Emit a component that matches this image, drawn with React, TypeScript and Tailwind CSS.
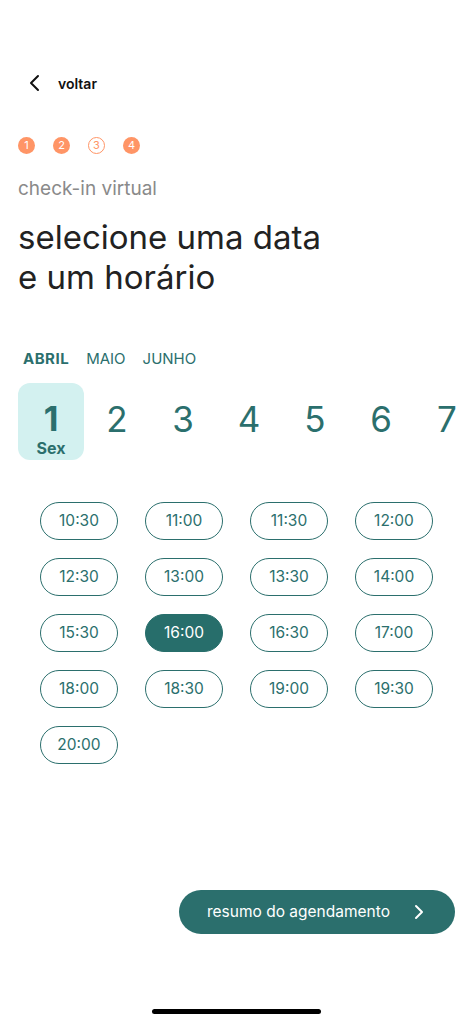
import React, { useState } from 'react';

const steps = [
  { n: 1, done: true },
  { n: 2, done: true },
  { n: 3, done: false },
  { n: 4, done: true },
];

const months = ['ABRIL', 'MAIO', 'JUNHO'];
const days = [1, 2, 3, 4, 5, 6, 7];
const times = [
  '10:30', '11:00', '11:30', '12:00',
  '12:30', '13:00', '13:30', '14:00',
  '15:30', '16:00', '16:30', '17:00',
  '18:00', '18:30', '19:00', '19:30',
  '20:00',
];

export default function App() {
  const [month, setMonth] = useState('ABRIL');
  const [day, setDay] = useState(1);
  const [time, setTime] = useState('16:00');

  return (
    <div
      className="relative w-[473px] h-[1024px] bg-white overflow-hidden text-[#222]"
      style={{ fontFamily: 'Inter, "Noto Sans", sans-serif' }}
    >
      {/* header */}
      <div className="flex items-center pt-[72px] pl-[27px] h-[94px]">
        <svg width="16" height="20" viewBox="0 0 16 20" fill="none">
          <path d="M11 3 L4 10 L11 17" stroke="#111" strokeWidth="2" strokeLinecap="round" strokeLinejoin="round" />
        </svg>
        <span className="ml-[15px] text-[14px] font-semibold text-[#111]">voltar</span>
      </div>

      {/* steps */}
      <div className="flex items-center gap-[18px] pl-[18px] mt-[43px]">
        {steps.map((s) => (
          <div
            key={s.n}
            className={`w-[17px] h-[17px] rounded-full flex items-center justify-center text-[11px] ${
              s.done ? 'bg-[#ff9566] text-white' : 'border border-[#ff9566] text-[#ff9566]'
            }`}
          >
            {s.n}
          </div>
        ))}
      </div>

      <div className="pl-[18px] mt-[23px] text-[19px] leading-[24px] text-[#8a8a8a]">check-in virtual</div>
      <h1 className="pl-[18px] mt-[16px] text-[33px] leading-[40px] font-normal text-[#222]">
        selecione uma data
        <br />e um horário
      </h1>

      {/* months */}
      <div className="flex items-center gap-[17px] pl-[23px] mt-[52px] text-[15px] leading-[20px] text-[#2b6f6d]">
        {months.map((m) => (
          <button
            key={m}
            onClick={() => setMonth(m)}
            className={m === month ? 'font-bold tracking-[0.5px]' : 'font-normal'}
          >
            {m}
          </button>
        ))}
      </div>

      {/* days */}
      <div className="flex pl-[18px] mt-[14px]">
        {days.map((d) => (
          <button
            key={d}
            onClick={() => setDay(d)}
            className={`w-[66px] h-[77px] shrink-0 rounded-[12px] flex flex-col items-center text-[#2b6f6d] ${
              d === day ? 'bg-[#d3f1f0]' : ''
            }`}
          >
            {d === day ? (
              <>
                <span className="mt-[16px] text-[34px] leading-[40px] font-bold">{d}</span>
                <span className="text-[16px] leading-[18px] font-bold">Sex</span>
              </>
            ) : (
              <span className="mt-[16px] text-[35px] leading-[40px] font-normal">{d}</span>
            )}
          </button>
        ))}
      </div>

      {/* times */}
      <div className="grid grid-cols-[repeat(4,78px)] gap-x-[27px] gap-y-[18px] pl-[40px] mt-[42px]">
        {times.map((t) => (
          <button
            key={t}
            onClick={() => setTime(t)}
            className={`h-[38px] rounded-full border text-[15.5px] flex items-center justify-center ${
              t === time
                ? 'bg-[#276e6b] border-[#276e6b] text-white'
                : 'border-[#2b6f6d] text-[#2b6f6d] bg-white'
            }`}
          >
            {t}
          </button>
        ))}
      </div>

      {/* bottom action */}
      <div className="absolute left-0 right-0 top-[890px] flex justify-end pr-[18px]">
        <button className="w-[276px] h-[44px] rounded-full bg-[#2b6f6d] text-white flex items-center pl-[28px] pr-[30px] justify-between">
          <span className="text-[15.5px]">resumo do agendamento</span>
          <svg width="12" height="16" viewBox="0 0 12 16" fill="none">
            <path d="M3 2 L9 8 L3 14" stroke="#fff" strokeWidth="2" strokeLinecap="round" strokeLinejoin="round" />
          </svg>
        </button>
      </div>

      <div className="absolute left-[152px] top-[1009px] w-[169px] h-[5px] rounded-full bg-black" />
    </div>
  );
}
